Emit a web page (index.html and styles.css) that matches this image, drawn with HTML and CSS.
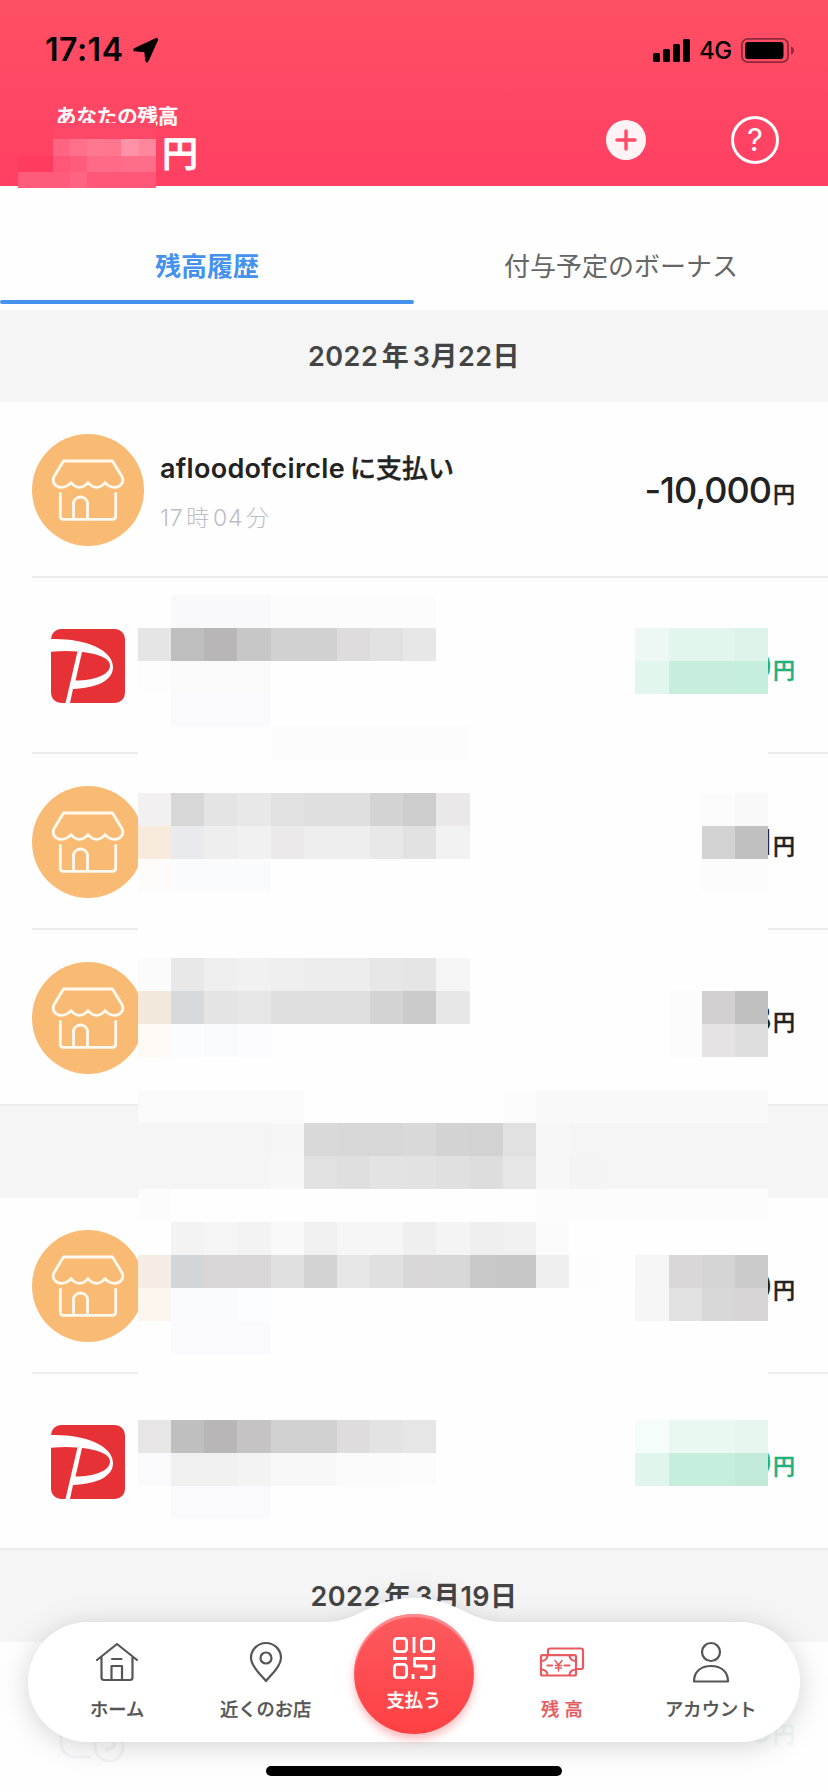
FILE: index.html
```
<!DOCTYPE html>
<html lang="ja">
<head>
<meta charset="utf-8">
<title>残高履歴</title>
<link rel="stylesheet" href="styles.css">
</head>
<body>
<svg class="defs" aria-hidden="true">
  <symbol id="store" viewBox="0 0 112 112">
    <circle cx="56" cy="56" r="56" fill="#f9bb74"/>
    <g fill="none" stroke="#fffaf0" stroke-width="2.8" stroke-linecap="round" stroke-linejoin="round">
      <path d="M31.500 27H80.500L90.500 43.500C92 49 88 53.300 83 53.300C78.500 53.300 75 51 73 48.500C71 51 68 53.300 64.500 53.300C61 53.300 58 51 56 48.500C54 51 51 53.300 47.500 53.300C44 53.300 41 51 39 48.500C37 51 33.500 53.300 29 53.300C24 53.300 20 49 21.500 43.500Z"/>
      <path d="M28.300 59.500V82Q28.300 85.300 31.600 85.300H80.400Q83.700 85.300 83.700 82V59.500"/>
      <path d="M41.500 85V68.500A7.200 7.200 0 0 1 55.500 68.500V85"/>
    </g>
  </symbol>
  <symbol id="pay" viewBox="0 0 74 74">
    <rect width="74" height="74" rx="10" fill="#e63237"/>
    <path fill="#fff" d="M0 10C32 9 62 20 62 38C62 52 45 59 22 60L19 74H14.500L26.500 22.500C18 21.500 9 21.800 0 22.800ZM31 23L24.500 51.500C43 51.500 59 46 59 36.500C59 29 46 24.500 31 23Z"/>
  </symbol>
</svg>

<div class="screen">
  <header class="header">
    <div class="status">
      <span class="clock">17:14</span>
      <svg class="arrow" viewBox="0 0 25 25"><path d="M23.500 .3Q25 .2 24.600 1.900L15 23.300Q14 25.200 12.800 23.300L11.800 13.700L1.600 12.800Q-.8 12 1.200 10.700Z" stroke="#000" stroke-linejoin="round"/></svg>
      <svg class="signal" viewBox="0 0 37 23"><rect y="14" width="7" height="9" rx="1.500"/><rect x="10" y="10" width="7" height="13" rx="1.500"/><rect x="20" y="5" width="7" height="18" rx="1.500"/><rect x="30" width="7" height="23" rx="1.500"/></svg>
      <span class="network">4G</span>
      <svg class="battery" viewBox="0 0 53 25"><rect x=".9" y=".9" width="46.200" height="23.200" rx="6" fill="none" stroke="#8e2a3c" stroke-width="1.800"/><rect x="4" y="4" width="38.500" height="17" rx="3"/><path d="M50 8.500Q53 9.500 53 12.500Q53 15.500 50 16.500Z" fill="#8e2a3c"/></svg>
    </div>
    <div class="balance">
      <div class="balance-text">
        <div class="balance-label">あなたの残高</div>
        <div class="balance-unit">円</div>
      </div>
      <svg class="plus" viewBox="0 0 40 40"><circle cx="20" cy="20" r="20" fill="#fff3f5"/><path d="M20 11V29M11 20H29" stroke="#ff4a68" stroke-width="3.400" stroke-linecap="round"/></svg>
      <div class="help">?</div>
    </div>
    <svg class="mosaic-head" id="mosaic-head" viewBox="0 0 138 65" shape-rendering="crispEdges"></svg>
  </header>

  <nav class="tabs">
    <div class="tab active">残高履歴</div>
    <div class="tab">付与予定のボーナス</div>
  </nav>

  <main class="history">
    <div class="date">2022<i></i>年<i></i>3月22日</div>
    <div class="row">
      <svg class="store"><use href="#store"/></svg>
      <div class="desc"><div class="name"><span class="latin">afloodofcircle</span>に支払い</div><div class="time">17<i></i>時<i></i>04<i></i>分</div></div>
      <div class="amount">-10,000<small>円</small></div>
    </div>
    <div class="row"><svg class="pay"><use href="#pay"/></svg><div class="amount plus-amount">0<small>円</small></div></div>
    <div class="row"><svg class="store"><use href="#store"/></svg><div class="amount">1<small>円</small></div></div>
    <div class="row last"><svg class="store"><use href="#store"/></svg><div class="amount">3<small>円</small></div></div>
    <div class="date"></div>
    <div class="row"><svg class="store"><use href="#store"/></svg><div class="amount">0<small>円</small></div></div>
    <div class="row last"><svg class="pay"><use href="#pay"/></svg><div class="amount plus-amount">0<small>円</small></div></div>
    <div class="date">2022<i></i>年<i></i>3月19日</div>
    <div class="row faded">
      <svg class="ghost" viewBox="0 0 74 74" fill="none" stroke="#8d8da8" stroke-width="3"><path d="M10 35V48Q10 64 26 64H40"/><circle cx="58" cy="54" r="14"/><path d="M52 49Q58 45 63 50Q65 55 54 57"/></svg>
      <div class="amount plus-amount">0<small>円</small></div>
    </div>
    <svg class="mosaic" id="mosaic" viewBox="0 0 19 28" preserveAspectRatio="none" shape-rendering="crispEdges"></svg>
  </main>

  <nav class="bar">
    <svg class="bar-shape" viewBox="0 0 772 144"><path d="M60 24H298C330 24 344 0 386 0S442 24 474 24H712A60 60 0 0 1 712 144H60A60 60 0 0 1 60 24Z" fill="#fff"/></svg>
    <div class="item">
      <svg viewBox="0 0 44 44"><path d="M2 20L22 4L42 20M6.500 17V37.500Q6.500 40 9 40H35Q37.500 40 37.500 37.500V17M16.500 40V26H27V40M17 19H26.500"/></svg>
      <span>ホーム</span>
    </div>
    <div class="item">
      <svg viewBox="0 0 44 44"><path d="M22 41C19 37 7 27 7 18A15 15 0 0 1 37 18C37 27 25 37 22 41Z"/><circle cx="22" cy="18" r="5.500"/></svg>
      <span>近くのお店</span>
    </div>
    <div class="item">
      <div class="pay-button">
        <svg viewBox="0 0 42 42"><rect x="1.400" y="1.400" width="12.200" height="13.200" rx="3"/><path d="M21 0V16M0 21.500H14"/><rect x="28.400" y="1.400" width="12.200" height="13.200" rx="3"/><rect x="1.400" y="27.400" width="12.200" height="13.200" rx="3"/><path d="M42 21.500H21.500V29H33V33.500M41 28V37.500Q41 40.500 38 40.500H27M20 37V42"/></svg>
        <span>支払う</span>
      </div>
    </div>
    <div class="item current">
      <svg viewBox="0 0 44 44"><rect x="1" y="15.200" width="35" height="20.300" rx="1.500"/><path d="M8 15V10.500Q8 8.500 10 8.500H41Q43 8.500 43 10.500V27Q43 29 41 29H36.500M1 21Q7 21 7.500 15.500M29.500 15.500Q30 21 36 21M1 29.500Q7 29.500 7.500 35M29.500 35Q30 29.500 36 29.500M7.500 25.500H12M24.500 25.500H29.500"/><path class="yen" d="M15 20.500L18.500 25L22 20.500M18.500 25V31M15.500 25.500H21.500M15.500 28H21.500"/></svg>
      <span class="spaced">残高</span>
    </div>
    <div class="item">
      <svg viewBox="0 0 44 44"><circle cx="22" cy="12" r="9"/><path d="M5 41.500C5 31.500 12 26 22 26S39 31.500 39 41.500Z"/></svg>
      <span>アカウント</span>
    </div>
  </nav>
  <div class="home-indicator"></div>
</div>
<script src="mosaic.js"></script>
</body>
</html>
```

FILE: styles.css
```
body {
  margin: 0;
  background: #fff;
  font-family: Inter, "Noto Sans CJK JP", sans-serif;
  color: #222;
}
.defs { position: absolute; width: 0; height: 0; }
.screen { position: relative; width: 828px; height: 1792px; overflow: hidden; background: #fefefe; }

.header {
  position: relative;
  height: 186px;
  box-sizing: border-box;
  padding-top: 28px;
  background: linear-gradient(#ff5064, #ff3f63);
}
.status { display: flex; align-items: center; height: 44px; padding: 0 34px 0 45px; color: #000; }
.clock { width: 79px; padding-bottom: 2px; font-size: 32px; font-weight: 600; letter-spacing: 0.5px; white-space: nowrap; }
.arrow { width: 25px; height: 25px; margin-left: 9px; overflow: visible; }
.signal { width: 37px; height: 23px; margin-left: auto; }
.network { width: 42px; padding-left: 9px; box-sizing: border-box; font-size: 24px; font-weight: 500; letter-spacing: -0.6px; }
.battery { width: 53px; height: 25px; margin-left: 9px; }
.balance { display: flex; align-items: center; height: 108px; padding: 0 49px 0 56px; margin-top: 14px; }
.balance-text { flex: 1; align-self: flex-start; color: #fff; font-weight: 500; -webkit-text-stroke: 0.5px #fff; }
.balance-label { margin-top: 17px; font-size: 20.4px; line-height: 28px; }
.balance-unit { padding-left: 106px; font-size: 36px; line-height: 44px; margin-top: 1px; -webkit-text-stroke: 0.9px #fff; }
.balance .plus { width: 40px; height: 40px; align-self: flex-start; margin: 34px 85px 0 0; }
.help {
  width: 48px; height: 48px; box-sizing: border-box;
  align-self: flex-start; margin-top: 30px;
  border: 3px solid #fff; border-radius: 50%;
  color: #fff; font-size: 31px; font-weight: 400; line-height: 42px; text-align: center;
}
.mosaic-head { position: absolute; left: 18px; top: 123px; width: 138px; height: 65px; z-index: 1; }

.tabs { display: flex; height: 124px; box-sizing: border-box; padding-top: 40px; }
.tab {
  position: relative;
  flex: 1; height: 78px; box-sizing: border-box; padding-top: 2px;
  text-align: center; font-size: 26px; line-height: 78px; color: #666;
}
.tab.active { color: #4492ee; font-weight: 700; }
.tab.active::after {
  content: ""; position: absolute; left: 0; right: 0; bottom: 0;
  height: 4px; border-radius: 2px; background: #4492ee;
}

.history { position: relative; }
.date {
  height: 92px; box-sizing: border-box; padding-top: 1px; background: #f5f5f5; color: #444;
  text-align: center; font-size: 27px; font-weight: 600; line-height: 92px; letter-spacing: 0.5px;
}
.date i { display: inline-block; width: 3.5px; }
.time i { display: inline-block; width: 3px; }
.row {
  position: relative;
  display: flex; align-items: center;
  height: 176px; padding: 0 33px 0 32px; box-sizing: border-box;
}
.row::after { content: ""; position: absolute; left: 32px; right: 0; bottom: 0; height: 2px; background: #ececec; }
.row.last::after { left: 0; }
.store { flex: none; width: 112px; height: 112px; }
.pay { flex: none; width: 74px; height: 74px; margin-left: 19px; }
.desc { margin-left: 16px; padding-top: 5px; }
.name { font-size: 26px; font-weight: 500; line-height: 40px; white-space: nowrap; -webkit-text-stroke: 0.4px #222; }
.latin { font-size: 27px; font-weight: 600; letter-spacing: 0.3px; margin-right: 5px; -webkit-text-stroke: 0; }
.time { margin-top: 11px; font-size: 23px; font-weight: 300; line-height: 36px; color: #bdbdc6; letter-spacing: 0.7px; }
.amount { margin-left: auto; font-size: 36px; font-weight: 500; letter-spacing: -1px; white-space: nowrap; }
.amount small { position: relative; top: -1px; font-size: 22px; margin-left: 2px; letter-spacing: 0; -webkit-text-stroke: 0.5px currentColor; }
.plus-amount { color: #22b07d; }
.faded { opacity: 0.07; }
.faded::after { display: none; }
.ghost { width: 74px; height: 74px; margin-left: 19px; }
.mosaic { position: absolute; left: 138px; top: 285px; width: 630px; height: 924px; }

.bar {
  position: absolute; left: 28px; top: 1598px; width: 772px; height: 144px;
  box-sizing: border-box; padding: 42px 15px 0;
  display: grid; grid-template-columns: repeat(5, 1fr);
}
.bar-shape { position: absolute; inset: 0; width: 772px; height: 144px; overflow: visible; filter: drop-shadow(0 4px 14px rgba(0, 0, 0, 0.17)); }
.item { position: relative; display: flex; flex-direction: column; align-items: center; color: #555; font-size: 18.3px; font-weight: 500; line-height: 28px; white-space: nowrap; }
.item svg { width: 44px; height: 44px; fill: none; stroke: currentColor; stroke-width: 2.2; stroke-linejoin: round; stroke-linecap: round; overflow: visible; }
.item > span { margin-top: 11px; -webkit-text-stroke: 0.25px currentColor; }
.item.current { color: #e65a60; }
.item .yen { stroke-width: 1.5; }
.spaced { letter-spacing: 5px; padding-left: 4px; }
.pay-button {
  width: 120px; height: 120px; margin-top: -26px; box-sizing: border-box; padding-top: 23px;
  display: flex; flex-direction: column; align-items: center;
  border-radius: 50%; color: #fff;
  background: linear-gradient(#fc5a5f, #ff4043);
  box-shadow: inset 0 3px 1px #ff8c92, 0 5px 9px rgba(255, 70, 75, 0.38);
}
.pay-button svg { width: 42px; height: 42px; stroke-width: 2.8; stroke-linecap: butt; }
.pay-button span { margin-top: 7px; -webkit-text-stroke: 0.3px #fff; }
.home-indicator { position: absolute; left: 266px; top: 1766px; width: 296px; height: 10px; border-radius: 5px; background: #000; }
```

FILE: mosaic.js
```
// Privacy mosaic: each entry is [row, first column, space-separated cell colours].
// Two-digit colours are grey levels.
const rows = [
  [0, 1, "f9f9fb f9f9fb f9f9fb fc fc fc fc fc"],
  [1, 0, "e5 bfbebe b9b6b7 c7 d1 d1 dedcdd e1 e7"],
  [1, 15, "edf8f5 e2f6ed e2f6ed ddf3ea"],
  [2, 0, "fd fafafb fafafb fafafb"],
  [2, 15, "e1f6ec c7eedd c7eedd c6eedc"],
  [3, 1, "fafafc fafafc fafafc"],
  [4, 4, "fc fc fc fc fc fc"],
  [6, 0, "f2f0f0 d7 e4 e8 e2 df df d3 cd ebe8e9"],
  [6, 17, "fc f9"],
  [7, 0, "f8ebdd e8eaed ee f1 ece9ea ee ee e8 e2 f2"],
  [7, 17, "d2 c0"],
  [8, 0, "fdfcfb fafbfd fafbfd fafbfd"],
  [8, 17, "fc fc"],
  [11, 0, "fb e8 ef f1 ef ed ed e7 e5 f5"],
  [12, 0, "f2e8dc d7dadd e4 e6 df df df d3 cb e7"],
  [12, 16, "fc d3d0d1 c0"],
  [13, 0, "fef9f5 fbfcfe f9fafd fcfcff"],
  [13, 16, "fc e5e3e4 de"],
  [15, 0, "fa fa fa fa fa"],
  [15, 11, "fc f9 f9 f9 f9 f9 f9 f9"],
  [16, 0, "f5 f5 f5 f5 f6 d9 d7 d7 d9 d3 d2 e1 f7 f5 f5 f5 f5 f5 f5"],
  [17, 0, "f5 f5 f5 f5 f7 e1 df e3 e2 e0 dd e6 f7 f4 f5 f5 f5 f5 f5"],
  [18, 0, "fc"],
  [18, 12, "fc fc fc fc fc fc fc"],
  [19, 1, "f3 f5 f3 f9 f0 f6 f6 ef f4 ef f1 fb"],
  [20, 0, "f5ece3 d3d6d9 d8d6d7 d8d6d7 e0 d2 e6 e0 d9d6d7 d7 c8 c7 ef fd"],
  [20, 15, "f5 dad7d8 d5 cb"],
  [21, 0, "fdf6ef fafbfe fafbfe fbfdff"],
  [21, 15, "f6 e1 d8 d8d5d6"],
  [22, 1, "fafafc fafafc fafafc"],
  [25, 0, "e8e5e6 bf b9b6b7 c6c3c4 d1 d1 dedcdd e3 e6"],
  [25, 15, "f5fdfa eaf8f2 eaf8f2 e7f7ef"],
  [26, 0, "fafafc f0 f0 f3 f8 f8 fb fb fc"],
  [26, 15, "e0f5ec c6eedc c6eedc c2ead8"],
  [27, 1, "fafafc fafafc fafafc"]
];

function cell(svg, x, y, w, h, fill) {
  const r = document.createElementNS("http://www.w3.org/2000/svg", "rect");
  Object.entries({ x, y, width: w, height: h, fill }).forEach(([k, v]) => r.setAttribute(k, v));
  svg.appendChild(r);
}

const list = document.getElementById("mosaic");
cell(list, 0, 0, 19, 28, "#fefefe");
rows.forEach(([y, x0, colours]) =>
  colours.split(" ").forEach((c, i) => cell(list, x0 + i, y, 1, 1, "#" + (c.length === 2 ? c.repeat(3) : c))));

const head = document.getElementById("mosaic-head");
[
  [35, 0, 103, 16, "#ff4768"],
  [35, 16, 17, 17, "#ff6582"], [52, 16, 17, 17, "#ff708a"], [69, 16, 17, 17, "#ff7890"],
  [86, 16, 17, 17, "#ff768e"], [103, 16, 18, 17, "#ff92a6"], [121, 16, 17, 17, "#ff869c"],
  [0, 33, 35, 16, "#ff3b60"], [35, 33, 17, 16, "#ff5576"], [52, 33, 17, 16, "#ff5c7b"],
  [69, 33, 34, 16, "#ff6b87"], [103, 33, 35, 16, "#ff6e89"],
  [0, 49, 52, 16, "#ff5b7b"], [52, 49, 17, 16, "#ff6382"], [69, 49, 69, 16, "#ff5778"]
].forEach((c) => cell(head, ...c));
```
